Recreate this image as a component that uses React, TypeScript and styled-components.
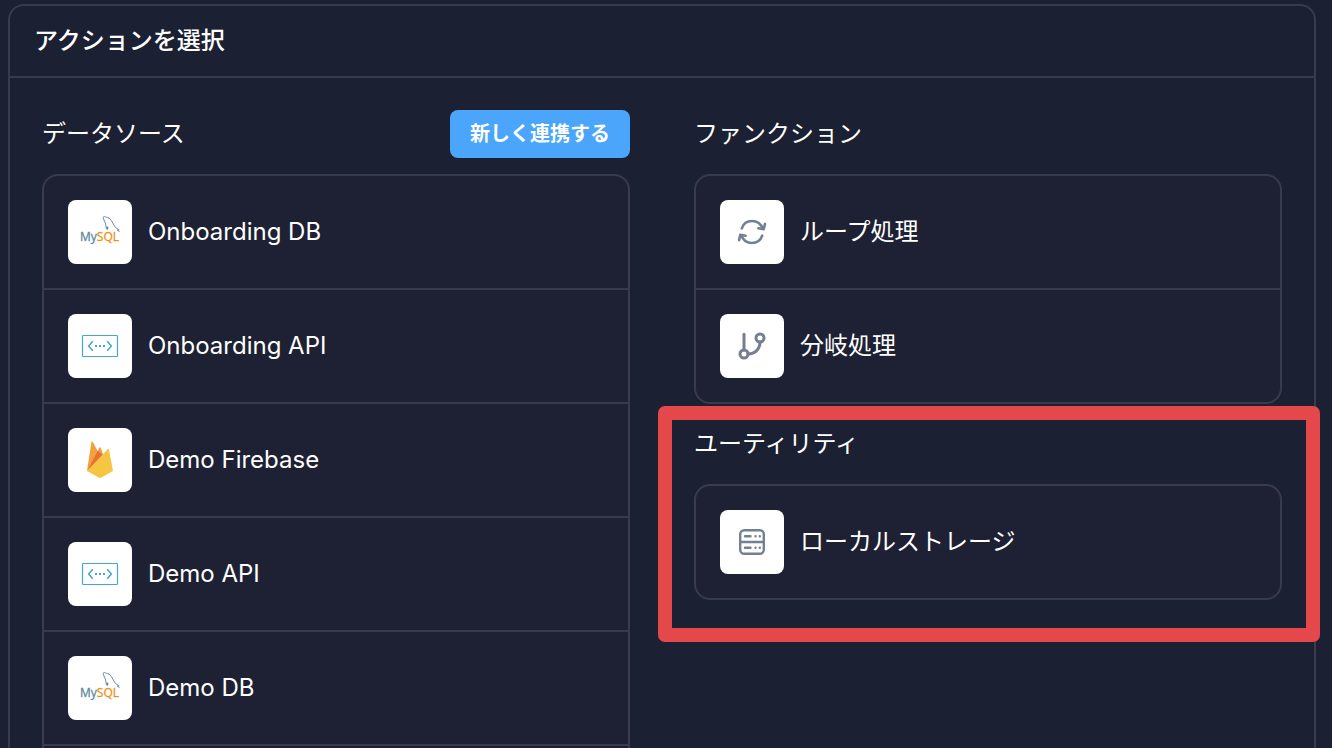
import React from "react";
import styled, { createGlobalStyle } from "styled-components";

const GlobalStyle = createGlobalStyle`
  *, *::before, *::after { box-sizing: border-box; }
  body {
    margin: 0;
    background: #1c2033;
    color: #ffffff;
    font-family: Inter, "Noto Sans CJK JP", sans-serif;
    -webkit-font-smoothing: antialiased;
  }
`;

const Page = styled.main`
  height: 100vh;
  overflow: hidden;
  padding: 4px 16px 0 8px;
`;

const Panel = styled.section`
  display: flex;
  flex-direction: column;
  height: 100%;
  border: 2px solid #393b4d;
  border-bottom: 0;
  border-radius: 16px 16px 0 0;
`;

const PanelHeader = styled.header`
  padding: 17px 24px;
  border-bottom: 2px solid #393b4d;
`;

const PanelTitle = styled.h1`
  margin: 0;
  font-size: 24px;
  font-weight: 500;
  line-height: 36px;
`;

const PanelBody = styled.div`
  flex: 1;
  display: grid;
  grid-template-columns: 1fr 1fr;
  gap: 64px;
  padding: 32px 32px 0;
`;

const Column = styled.div`
  display: flex;
  flex-direction: column;
  gap: 16px;
`;

const Group = styled.section<{ $grow?: boolean }>`
  position: relative;
  display: flex;
  flex-direction: column;
  gap: 16px;
  flex: ${(p) => (p.$grow ? "1" : "none")};
`;

const GroupHeader = styled.div`
  display: flex;
  align-items: center;
  justify-content: space-between;
  height: 48px;
`;

const GroupTitle = styled.h2`
  margin: 0;
  font-size: 24px;
  font-weight: 400;
  line-height: 36px;
`;

const ConnectButton = styled.button`
  height: 48px;
  padding: 0 20px;
  border: 0;
  border-radius: 8px;
  background: #4ba5fa;
  color: #ffffff;
  font: 600 20px/28px Inter, "Noto Sans CJK JP", sans-serif;
  cursor: pointer;
`;

const List = styled.ul<{ $open?: boolean }>`
  flex: ${(p) => (p.$open ? "1" : "none")};
  margin: 0;
  padding: 0;
  list-style: none;
  border: 2px solid #393b4d;
  border-bottom-width: ${(p) => (p.$open ? "0" : "2px")};
  border-radius: ${(p) => (p.$open ? "16px 16px 0 0" : "16px")};
  background: #1d2133;
`;

const Item = styled.li<{ $divided: boolean }>`
  border-bottom: ${(p) => (p.$divided ? "2px solid #393b4d" : "0")};
`;

const ItemButton = styled.button`
  display: flex;
  align-items: center;
  gap: 16px;
  width: 100%;
  padding: 24px;
  border: 0;
  background: none;
  color: inherit;
  font: 400 24px/36px Inter, "Noto Sans CJK JP", sans-serif;
  text-align: left;
  cursor: pointer;
`;

const IconTile = styled.span`
  display: flex;
  flex: none;
  align-items: center;
  justify-content: center;
  width: 64px;
  height: 64px;
  border-radius: 8px;
  background: #ffffff;
  color: #748091;
`;

const Highlight = styled.div`
  position: absolute;
  inset: -14px -38px -42px -36px;
  border: 14px solid #e5484b;
  border-radius: 7px;
  pointer-events: none;
`;

const MySqlIcon = () => (
  <svg width="64" height="64" viewBox="0 0 64 64" aria-hidden="true">
    <text
      x="12"
      y="41"
      fontFamily="'Open Sans', sans-serif"
      fontSize="12"
      fontWeight="400"
      fill="#5d87a1"
      stroke="#5d87a1"
      strokeWidth="0.3"
    >
      My
      <tspan fill="#f29111" stroke="#f29111">SQL</tspan>
    </text>
    <path
      d="M39 29.500c-1.200-1.600-.9-3-1.200-4.600C37.400 22.300 35.300 19.300 35.200 17.600c-.2-1.300 1.700-1.300 3-.3 1.900-.2 3.800 1.300 5.300 3.400 1.300 2 2.200 4.500 3.600 6.200 1.100 1.300 2.900 2.100 4.100 3l-2 .1c.8.6 1.700 1 2.400 1.700"
      fill="none"
      stroke="#6b8ea6"
      strokeWidth="1"
    />
    <path d="M38.600 26l2 1.500-1 2.200-1.300-.8z" fill="#5d87a1" />
  </svg>
);

const ApiIcon = () => (
  <svg width="64" height="64" viewBox="0 0 64 64" fill="none" stroke="#46a6cb" aria-hidden="true">
    <rect x="14.500" y="21.500" width="35" height="21" rx="0.800" strokeWidth="1.200" />
    <path d="M24.800 27.200L20.600 32l4.200 4.800M39.200 27.200l4.200 4.800-4.200 4.800" strokeWidth="1.500" />
    <path d="M27 32h2M31 32h2M35 32h2" strokeWidth="1.800" />
  </svg>
);

const FirebaseIcon = () => (
  <svg width="64" height="64" viewBox="0 0 64 64" aria-hidden="true">
    <path d="M19 43L23.400 14.300c.2-.9 1-.9 1.400-.2l4.700 8.700z" fill="#f2a03d" />
    <path d="M35.600 27.800L19 43l12.300-23.200c.4-.7 1.100-.7 1.500 0z" fill="#f2a03d" />
    <path d="M29.500 22.800L19 43l16.600-15.200z" fill="#ea7032" />
    <path d="M45 43l-4-21.300c-.2-.8-.9-1-1.400-.5L19 43l11.700 6.600c.9.500 1.800.5 2.700 0z" fill="#f6c544" />
  </svg>
);

const LoopIcon = () => (
  <svg
    width="64"
    height="64"
    viewBox="0 0 64 64"
    fill="none"
    stroke="currentColor"
    strokeWidth="2.600"
    strokeLinecap="round"
    strokeLinejoin="round"
    aria-hidden="true"
  >
    <path d="M21.800 28.300C23.300 23.900 27.300 21 32 21c4.900 0 9.100 3.100 10.700 7.700" />
    <path d="M38.400 28.300l5.300 1 1.300-5.400" />
    <path d="M42.200 35.700C40.700 40.100 36.700 43 32 43c-4.900 0-9.100-3.100-10.700-7.700" />
    <path d="M25.600 35.700l-5.300-1-1.200 5.400" />
  </svg>
);

const BranchIcon = () => (
  <svg
    width="64"
    height="64"
    viewBox="0 0 64 64"
    fill="none"
    stroke="currentColor"
    strokeWidth="3"
    strokeLinecap="round"
    aria-hidden="true"
  >
    <path d="M24 20.200V36" />
    <circle cx="24" cy="40" r="4" />
    <circle cx="40" cy="24" r="4" />
    <path d="M40 28c0 7-5 12-12 12" />
  </svg>
);

const StorageIcon = () => (
  <svg
    width="64"
    height="64"
    viewBox="0 0 64 64"
    fill="none"
    stroke="currentColor"
    strokeWidth="2.400"
    strokeLinecap="round"
    aria-hidden="true"
  >
    <rect x="20.200" y="20.200" width="23.600" height="23.600" rx="4" />
    <path d="M20.200 32h23.600" />
    <path d="M25 26.300h5.500M25 37.700h5.500M35.500 26.300h.01M39.800 26.300h.01M35.500 37.700h.01M39.800 37.700h.01" />
  </svg>
);

type Entry = { label: string; Icon: React.ComponentType };

const dataSources: Entry[] = [
  { label: "Onboarding DB", Icon: MySqlIcon },
  { label: "Onboarding API", Icon: ApiIcon },
  { label: "Demo Firebase", Icon: FirebaseIcon },
  { label: "Demo API", Icon: ApiIcon },
  { label: "Demo DB", Icon: MySqlIcon },
];

const functions: Entry[] = [
  { label: "ループ処理", Icon: LoopIcon },
  { label: "分岐処理", Icon: BranchIcon },
];

const utilities: Entry[] = [{ label: "ローカルストレージ", Icon: StorageIcon }];

const ActionList = ({ entries, open }: { entries: Entry[]; open?: boolean }) => (
  <List $open={open}>
    {entries.map(({ label, Icon }, i) => (
      <Item key={label} $divided={Boolean(open) || i < entries.length - 1}>
        <ItemButton type="button">
          <IconTile>
            <Icon />
          </IconTile>
          {label}
        </ItemButton>
      </Item>
    ))}
  </List>
);

export default function App() {
  return (
    <>
      <GlobalStyle />
      <Page>
        <Panel>
          <PanelHeader>
            <PanelTitle>アクションを選択</PanelTitle>
          </PanelHeader>
          <PanelBody>
            <Column>
              <Group $grow>
                <GroupHeader>
                  <GroupTitle>データソース</GroupTitle>
                  <ConnectButton type="button">新しく連携する</ConnectButton>
                </GroupHeader>
                <ActionList entries={dataSources} open />
              </Group>
            </Column>
            <Column>
              <Group>
                <GroupHeader>
                  <GroupTitle>ファンクション</GroupTitle>
                </GroupHeader>
                <ActionList entries={functions} />
              </Group>
              <Group>
                <GroupHeader>
                  <GroupTitle>ユーティリティ</GroupTitle>
                </GroupHeader>
                <ActionList entries={utilities} />
                <Highlight />
              </Group>
            </Column>
          </PanelBody>
        </Panel>
      </Page>
    </>
  );
}
